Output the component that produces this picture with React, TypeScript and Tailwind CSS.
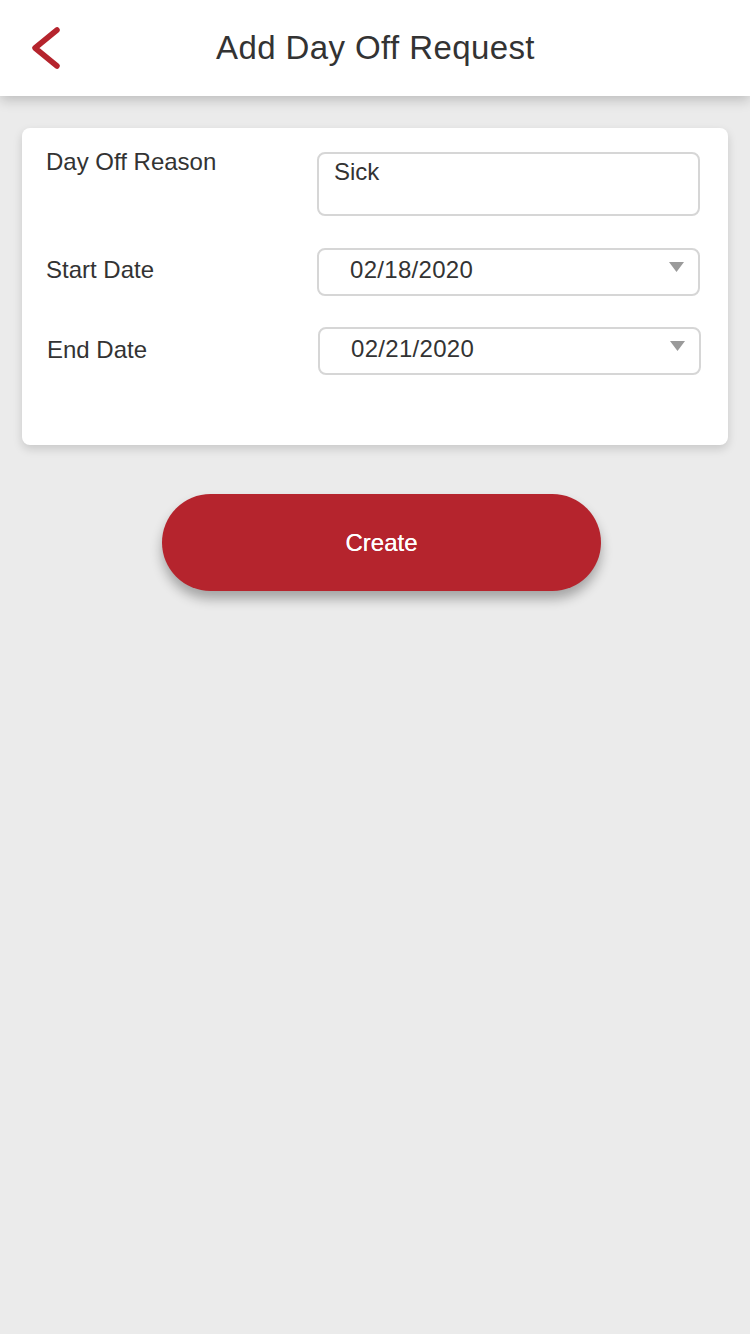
function DateField({ value }: { value: string }) {
  return (
    <div className="relative flex-1 h-[48px] border-2 border-[#d6d6d6] rounded-[8px] flex items-center pl-[31px]">
      <span className="text-[24px] leading-[28px] mb-[4px] tracking-[0.3px] text-[#333]">{value}</span>
      <svg className="absolute right-[14px] top-[12px]" width="15" height="10" viewBox="0 0 15 10">
        <polygon points="0,0 15,0 7.5,10" fill="#9a9a9a" />
      </svg>
    </div>
  )
}

export default function App() {
  return (
    <div className="min-h-[1334px] bg-[#ebebeb] font-['Liberation_Sans',Arial,sans-serif]">
      {/* Header */}
      <header className="relative z-10 h-[96px] bg-white shadow-[0_4px_12px_rgba(0,0,0,0.2)] flex items-center justify-center">
        <button className="absolute left-[26px] top-[22px]">
          <svg width="44" height="52" viewBox="0 0 44 52">
            <polyline
              points="31,8 9,26 31,44"
              fill="none"
              stroke="#b5242d"
              strokeWidth="5.5"
              strokeLinecap="round"
              strokeLinejoin="round"
            />
          </svg>
        </button>
        <h1 className="text-[33px] text-[#333] tracking-[0.4px] pl-[1px]">Add Day Off Request</h1>
      </header>

      <main className="px-[22px] pt-[32px]">
        {/* Form card */}
        <div className="bg-white rounded-[8px] shadow-[0_4px_10px_rgba(0,0,0,0.15)] pl-[24px] pr-[28px] pt-[20px] pb-[70px]">
          <div className="flex items-start">
            <div className="w-[271px] text-[24px] leading-[28px] text-[#333]">Day Off Reason</div>
            <div className="flex-1 h-[64px] mt-[4px] border-2 border-[#d6d6d6] rounded-[8px] pl-[15px] pt-[4px]">
              <span className="text-[24px] leading-[28px] text-[#333]">Sick</span>
            </div>
          </div>

          <div className="flex items-center mt-[32px]">
            <div className="w-[271px] text-[24px] leading-[28px] mb-[4px] text-[#333]">Start Date</div>
            <DateField value="02/18/2020" />
          </div>

          <div className="flex items-center mt-[31px] pl-[1px] -mr-[1px]">
            <div className="w-[271px] text-[24px] leading-[28px] mb-[2px] text-[#333]">End Date</div>
            <DateField value="02/21/2020" />
          </div>
        </div>

        {/* Create button */}
        <div className="flex justify-center mt-[49px] pl-[13px]">
          <button className="w-[439px] h-[97px] rounded-full bg-[#b5242d] text-white text-[24px] [text-shadow:0_0_0.6px_#fff] shadow-[0_8px_12px_rgba(0,0,0,0.3)]">
            Create
          </button>
        </div>
      </main>
    </div>
  )
}
